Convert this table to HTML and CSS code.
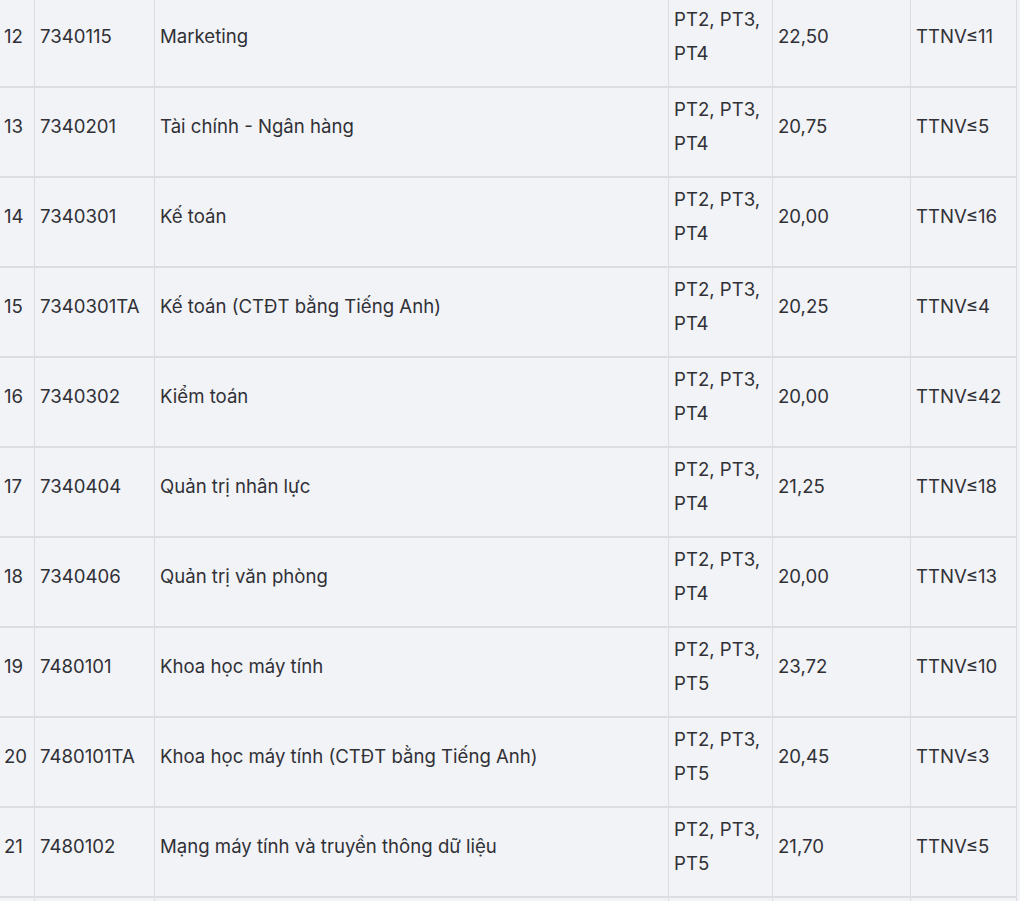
FILE: index.html
```html
<!DOCTYPE html>
<html lang="vi">
<head>
<meta charset="utf-8">
<title>Điểm chuẩn</title>
<link rel="stylesheet" href="styles.css">
</head>
<body>
<div class="wrap">
<table class="scores">
<colgroup>
<col class="c-no"><col class="c-code"><col class="c-name"><col class="c-pt"><col class="c-score"><col class="c-cond">
</colgroup>
<tbody>
<tr><td><p>12</p></td><td><p>7340115</p></td><td><p>Marketing</p></td><td><p>PT2, PT3,<br>PT4</p></td><td><p>22,50</p></td><td><p>TTNV≤11</p></td></tr>
<tr><td><p>13</p></td><td><p>7340201</p></td><td><p>Tài chính - Ngân hàng</p></td><td><p>PT2, PT3,<br>PT4</p></td><td><p>20,75</p></td><td><p>TTNV≤5</p></td></tr>
<tr><td><p>14</p></td><td><p>7340301</p></td><td><p>Kế toán</p></td><td><p>PT2, PT3,<br>PT4</p></td><td><p>20,00</p></td><td><p>TTNV≤16</p></td></tr>
<tr><td><p>15</p></td><td><p>7340301TA</p></td><td><p>Kế toán (CTĐT bằng Tiếng Anh)</p></td><td><p>PT2, PT3,<br>PT4</p></td><td><p>20,25</p></td><td><p>TTNV≤4</p></td></tr>
<tr><td><p>16</p></td><td><p>7340302</p></td><td><p>Kiểm toán</p></td><td><p>PT2, PT3,<br>PT4</p></td><td><p>20,00</p></td><td><p>TTNV≤42</p></td></tr>
<tr><td><p>17</p></td><td><p>7340404</p></td><td><p>Quản trị nhân lực</p></td><td><p>PT2, PT3,<br>PT4</p></td><td><p>21,25</p></td><td><p>TTNV≤18</p></td></tr>
<tr><td><p>18</p></td><td><p>7340406</p></td><td><p>Quản trị văn phòng</p></td><td><p>PT2, PT3,<br>PT4</p></td><td><p>20,00</p></td><td><p>TTNV≤13</p></td></tr>
<tr><td><p>19</p></td><td><p>7480101</p></td><td><p>Khoa học máy tính</p></td><td><p>PT2, PT3,<br>PT5</p></td><td><p>23,72</p></td><td><p>TTNV≤10</p></td></tr>
<tr><td><p>20</p></td><td><p>7480101TA</p></td><td><p>Khoa học máy tính (CTĐT bằng Tiếng Anh)</p></td><td><p>PT2, PT3,<br>PT5</p></td><td><p>20,45</p></td><td><p>TTNV≤3</p></td></tr>
<tr><td><p>21</p></td><td><p>7480102</p></td><td><p>Mạng máy tính và truyền thông dữ liệu</p></td><td><p>PT2, PT3,<br>PT5</p></td><td><p>21,70</p></td><td><p>TTNV≤5</p></td></tr>
<tr class="next"><td></td><td></td><td></td><td></td><td></td><td></td></tr>
</tbody>
</table>
</div>
</body>
</html>
```

FILE: styles.css
```css
html, body {
  margin: 0;
  padding: 0;
  background: #f2f3f7;
}
.wrap {
  height: 901px;
  overflow: hidden;
}
.scores {
  margin-top: -4px;
  margin-left: -2px;
  width: 1018px;
  table-layout: fixed;
  border-collapse: collapse;
  font-family: Inter, "Noto Sans", sans-serif;
  font-size: 18.6px;
  color: #303136;
}
.c-no { width: 36px; }
.c-code { width: 120px; }
.c-name { width: 514px; }
.c-pt { width: 104px; }
.c-score { width: 138px; }
.c-cond { width: 106px; }
.scores td {
  border-left: 1px solid #dcdde0;
  border-right: 1px solid #dcdde0;
  border-top: 2px solid #dcdde0;
  border-bottom: 2px solid #dcdde0;
  padding: 4px 5px 0 5px;
  height: 84px;
  vertical-align: middle;
  white-space: nowrap;
}
.scores p {
  margin: 0 0 16px;
  line-height: 34px;
}
.scores .pt {
  letter-spacing: 0;
}
```
